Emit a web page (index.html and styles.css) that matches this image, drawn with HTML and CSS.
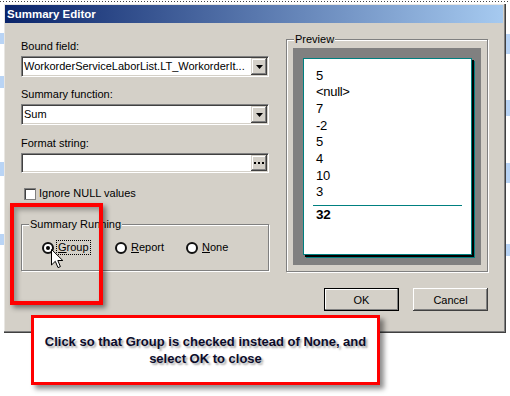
FILE: index.html
```html
<!DOCTYPE html>
<html lang="en">
<head>
  <meta charset="UTF-8">
  <title>Summary Editor</title>
  <link rel="stylesheet" href="styles.css">
</head>
<body>
  <div class="top-strip"></div>
  <div class="screen">
    <div class="side side-left"></div>

    <div class="dialog">
      <div class="titlebar">Summary Editor</div>

      <div class="dialog-body">
        <div class="left-col">
          <div class="field first">
            <div class="label">Bound field:</div>
            <div class="combo">
              <span class="combo-text">WorkorderServiceLaborList.LT_WorkorderIt...</span>
              <span class="side-btn"><svg width="7" height="4" viewBox="0 0 7 4"><polygon points="0,0 7,0 3.5,4" fill="#000"/></svg></span>
            </div>
          </div>

          <div class="field">
            <div class="label">Summary function:</div>
            <div class="combo">
              <span class="combo-text">Sum</span>
              <span class="side-btn"><svg width="7" height="4" viewBox="0 0 7 4"><polygon points="0,0 7,0 3.5,4" fill="#000"/></svg></span>
            </div>
          </div>

          <div class="field third">
            <div class="label">Format string:</div>
            <div class="combo">
              <span class="combo-text"></span>
              <span class="side-btn"><svg width="10" height="2" viewBox="0 0 10 2"><rect x="0" y="0" width="2" height="2" fill="#000"/><rect x="4" y="0" width="2" height="2" fill="#000"/><rect x="8" y="0" width="2" height="2" fill="#000"/></svg></span>
            </div>
          </div>

          <div class="check-row"><span class="checkbox"></span>Ignore NULL values</div>

          <div class="groupbox running">
            <span class="legend">Summary Running</span>
            <div class="radio-row">
              <div class="radio-item item-group"><span class="radio checked"></span><span class="radio-label focused"><u>G</u>roup</span></div>
              <div class="radio-item item-report"><span class="radio"></span><span class="radio-label"><u>R</u>eport</span></div>
              <div class="radio-item"><span class="radio"></span><span class="radio-label"><u>N</u>one</span></div>
            </div>
          </div>
        </div>

        <div class="groupbox preview">
          <span class="legend">Preview</span>
          <div class="well">
            <div class="page">
              <div class="val">5</div>
              <div class="val">&lt;null&gt;</div>
              <div class="val">7</div>
              <div class="val">-2</div>
              <div class="val">5</div>
              <div class="val">4</div>
              <div class="val">10</div>
              <div class="val">3</div>
              <div class="sep"></div>
              <div class="val total">32</div>
            </div>
          </div>
        </div>

        <div class="buttons">
          <button class="btn btn-default">OK</button>
          <button class="btn">Cancel</button>
        </div>
      </div>
    </div>

    <div class="side side-right"></div>
  </div>

  <div class="highlight"></div>
  <svg class="cursor" width="13" height="20" viewBox="0 0 13 20">
    <path d="M0.5 0.5 L0.5 16 L4.3 12.3 L7 18.6 L9.4 17.6 L6.8 11.5 L11.8 11.5 Z" fill="#fff" stroke="#000" stroke-width="1" stroke-linejoin="miter"/>
  </svg>

  <div class="callout">
    <p>Click so that Group is checked instead of None, and<br>select OK to close</p>
  </div>
</body>
</html>
```

FILE: styles.css
```css
html, body {
  margin: 0;
  padding: 0;
}

body {
  width: 510px;
  height: 396px;
  overflow: hidden;
  position: relative;
  background: #fff;
  font-family: 'Liberation Sans', Arial, sans-serif;
  font-size: 11px;
  color: #000;
}

.top-strip {
  height: 3px;
  background: #fff;
}

.top-strip::before {
  content: '';
  display: block;
  margin-top: 1px;
  height: 1px;
  background: repeating-linear-gradient(to right, #444 0 1px, transparent 1px 3px);
}

.screen {
  display: flex;
  height: 329px;
}

.side {
  background: linear-gradient(to bottom,
    #fff 0 29px, #b9d4f5 29px 40px, #fff 40px 72px, #b9d4f5 72px 84px,
    #fff 84px 158px, #b9d4f5 158px 172px, #fff 172px 230px, #b9d4f5 230px 241px, #fff 241px);
}

.side-left { width: 4px; }
.side-right {
  flex: 1;
  background: linear-gradient(to bottom,
    #fff 0 30px, #b9d4f5 30px 50px, #fff 50px 96px, #b9d4f5 96px 112px,
    #fff 112px 159px, #b9d4f5 159px 179px, #fff 179px 240px, #b9d4f5 240px 252px, #fff 252px);
}

.dialog {
  width: 502px;
  box-sizing: border-box;
  padding: 1px 3px 3px 1px;
  background: #d4d0c8;
  box-shadow: inset -1px -1px #404040, inset -2px -2px #808080, inset 1px 1px #e8e6e2;
  display: flex;
  flex-direction: column;
}

.titlebar {
  height: 18px;
  line-height: 18px;
  padding-left: 2px;
  background: linear-gradient(to right, #0a246a, #a6caf0);
  color: #fff;
  font-weight: bold;
  font-size: 11.5px;
}

.dialog-body {
  display: grid;
  grid-template-columns: 248px 202px;
  column-gap: 17px;
  padding: 16px 15px 0 16px;
}

/* left column */
.left-col {
  display: flex;
  flex-direction: column;
}

.field { margin-top: 11px; }
.field.first { margin-top: 1px; }
.field.third { margin-top: 12px; }

.label {
  line-height: 13px;
  margin-bottom: 3px;
}

.combo {
  display: flex;
  height: 21px;
  box-sizing: border-box;
  background: #fff;
  border: 1px solid;
  border-color: #808080 #fff #fff #808080;
  box-shadow: inset 1px 1px #404040, inset -1px -1px #d4d0c8;
  padding: 1px;
}

.third .combo { height: 20px; }

.combo-text {
  flex: 1;
  padding-left: 1px;
  line-height: 17px;
  white-space: nowrap;
  overflow: hidden;
}

.side-btn {
  width: 16px;
  display: flex;
  align-items: center;
  justify-content: center;
  background: #d4d0c8;
  box-shadow: inset -1px -1px #404040, inset 1px 1px #d4d0c8, inset -2px -2px #808080, inset 2px 2px #fff;
}

.check-row {
  display: flex;
  align-items: center;
  gap: 3px;
  margin-top: 14px;
  padding-left: 3px;
  line-height: 13px;
}

.checkbox {
  width: 12px;
  height: 12px;
  box-sizing: border-box;
  background: #fff;
  border: 1px solid #808080;
  box-shadow: inset 1px 1px #404040;
}

.groupbox {
  position: relative;
  border: 1px solid #808080;
  box-shadow: inset 1px 1px #fff, 1px 1px #fff;
}

.legend {
  position: absolute;
  top: -7px;
  left: 7px;
  padding: 0 1px;
  line-height: 13px;
  background: #d4d0c8;
}

.running {
  margin-top: 24px;
  height: 47px;
  box-sizing: border-box;
  padding: 15px 0 0 20px;
}

.radio-row {
  display: flex;
  align-items: center;
  height: 15px;
}

.radio-item {
  display: flex;
  align-items: center;
  gap: 2px;
}

.item-group { width: 73px; }
.item-report { width: 71px; }

.radio {
  width: 12px;
  height: 12px;
  box-sizing: border-box;
  border-radius: 50%;
  border: 2px solid #111;
  background: #fff;
  display: flex;
  align-items: center;
  justify-content: center;
}

.radio.checked::after {
  content: '';
  width: 4px;
  height: 4px;
  border-radius: 50%;
  background: #000;
}

.radio-label {
  line-height: 13px;
  padding: 0 1px;
  border: 1px solid transparent;
}

.radio-label.focused { border: 1px dotted #000; }

/* preview */
.preview {
  height: 233px;
  box-sizing: border-box;
  padding: 8px 6px 6px 6px;
}

.well {
  background: #808080;
  padding: 10px 9px 10px 10px;
}

.page {
  width: 169px;
  height: 197px;
  box-sizing: border-box;
  background: #fff;
  border: 1px solid #008080;
  box-shadow: 2px 2px 0 #000, 3px 3px 0 #008080;
  padding: 8.5px 9px 0 9px;
  font-family: 'Liberation Sans Narrow', 'Liberation Sans', sans-serif;
  font-size: 13px;
}

.val {
  line-height: 16.7px;
  padding-left: 3px;
  letter-spacing: -0.3px;
}

.sep {
  height: 1px;
  background: #008080;
  margin: 4px 0 1px;
}

.val.total { font-weight: bold; font-size: 13.5px; }

.buttons {
  grid-column: 1 / -1;
  display: flex;
  justify-content: flex-end;
  gap: 14px;
  margin-top: 16px;
}

.btn {
  width: 75px;
  height: 23px;
  padding: 0;
  border: none;
  background: #d4d0c8;
  font-family: 'Liberation Sans', Arial, sans-serif;
  font-size: 11px;
  color: #000;
  box-shadow: inset -1px -1px #404040, inset 1px 1px #fff, inset -2px -2px #808080, inset 2px 2px #d4d0c8;
}

.btn-default {
  border: 1px solid #000;
  box-shadow: inset -1px -1px #808080, inset 1px 1px #fff;
}

/* annotations */
.highlight {
  position: absolute;
  left: 10px;
  top: 203px;
  width: 93px;
  height: 102px;
  box-sizing: border-box;
  border: 4px solid #f00;
  box-shadow: 3px 3px 5px rgba(0, 0, 0, 0.45), inset 3px 3px 5px rgba(0, 0, 0, 0.3);
}

.cursor {
  position: absolute;
  left: 51px;
  top: 249px;
}

.callout {
  position: absolute;
  left: 31px;
  top: 315px;
  width: 349px;
  height: 70px;
  box-sizing: border-box;
  border: 3px solid #f00;
  background: #fff;
  box-shadow: 4px 4px 5px rgba(0, 0, 0, 0.45);
  display: flex;
  align-items: center;
  justify-content: center;
}

.callout p {
  margin: 0;
  text-align: center;
  font-weight: bold;
  font-size: 13px;
  line-height: 17px;
  color: #0b0b2a;
  text-shadow: 2px 2px 2px rgba(0, 0, 0, 0.35);
}
```
